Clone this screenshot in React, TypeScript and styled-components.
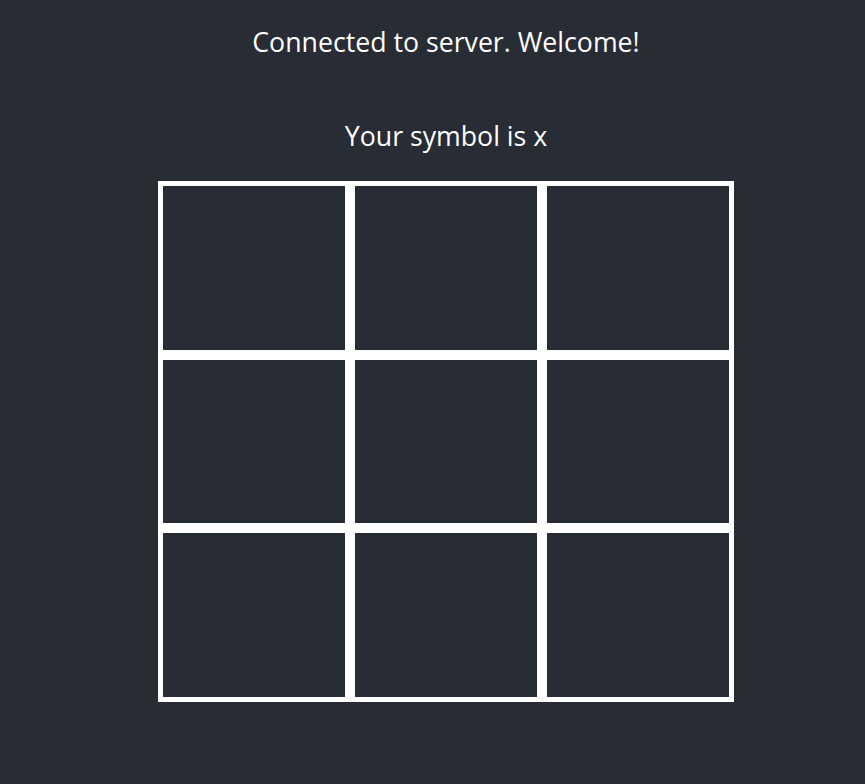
import React from 'react';
import styled, { createGlobalStyle } from 'styled-components';

const GlobalStyle = createGlobalStyle`
  html, body {
    margin: 0;
    padding: 0;
    background: #282c34;
  }
`;

const Page = styled.div`
  min-height: 784px;
  box-sizing: border-box;
  padding: 24px 0 0 27px;
  display: flex;
  flex-direction: column;
  align-items: center;
  color: #ffffff;
  font-family: 'Open Sans', 'Noto Sans', sans-serif;
  font-size: 26.7px;
`;

const Message = styled.p<{ $gap?: number }>`
  margin: 0 0 ${(p) => p.$gap ?? 0}px;
  line-height: 36px;
  text-align: center;
`;

const Board = styled.div`
  display: grid;
  grid-template-columns: repeat(3, 192px);
  grid-template-rows: repeat(3, 173.67px);
`;

const Cell = styled.div`
  box-sizing: border-box;
  border: 5px solid #ffffff;
  background: #282c34;
`;

export default function App(): JSX.Element {
  const cells = Array.from({ length: 9 }, (_, i) => i);
  return (
    <>
      <GlobalStyle />
      <Page>
        <Message $gap={58}>Connected to server. Welcome!</Message>
        <Message $gap={27}>Your symbol is x</Message>
        <Board>
          {cells.map((i) => (
            <Cell key={i} />
          ))}
        </Board>
      </Page>
    </>
  );
}
